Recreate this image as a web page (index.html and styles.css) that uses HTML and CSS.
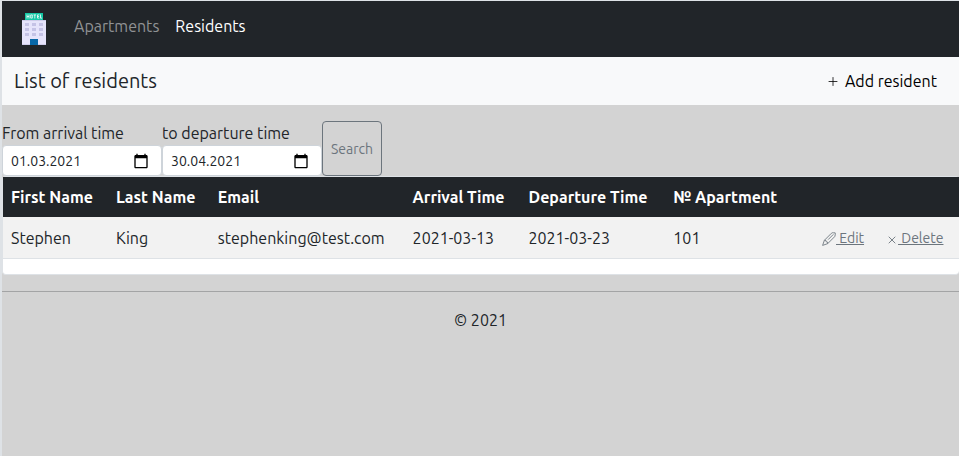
FILE: index.html
```html
<!DOCTYPE html>
<html lang="en">
<head>
<meta charset="utf-8">
<meta name="viewport" content="width=device-width, initial-scale=1">
<title>Residents</title>
<link rel="stylesheet" href="styles.css">
</head>
<body>
<header>
  <nav class="navbar">
    <a class="brand" href="#" aria-label="Hotel">
      <svg width="32" height="32" viewBox="0 0 32 32" aria-hidden="true">
        <path fill="#e6e4fb" d="M4 7h24v25H4z"/>
        <path fill="#cfcdea" d="M4 7h24v1H4zM4 31h24v1H4z"/>
        <path fill="#14c8a5" d="M7 0h18v7H7z"/>
        <path fill="none" stroke="#fff" stroke-width=".8" d="M9 1.500v4M11 1.500v4M9 3.500h2M12.700 1.900h1.600v3.200h-1.600zM15.500 1.900h2.600M16.800 1.900v3.600M21.300 1.900h-1.800v3.200h1.800M19.500 3.500h1.600M22.500 1.500v3.600h1.500"/>
        <path fill="#c5c3e6" d="M7 10h4v3H7zM14 10h4v3h-4zM21 10h4v3h-4zM7 15h4v3H7zM14 15h4v3h-4zM21 15h4v3h-4zM7 20h4v3H7zM14 20h4v3h-4zM21 20h4v3h-4z"/>
        <path fill="#0868a8" d="M12 26h8v6h-8z"/>
      </svg>
    </a>
    <a class="nav-link" href="#">Apartments</a>
    <a class="nav-link active" href="#" aria-current="page">Residents</a>
  </nav>
</header>
<main>
  <div class="titlebar">
    <h1>List of residents</h1>
    <a class="add" href="#">
      <svg width="16" height="16" viewBox="0 0 16 16" aria-hidden="true"><path d="M8 4.500v8M4 8.500h8" fill="none" stroke="currentColor" stroke-width=".8" stroke-linecap="round"/></svg>
      Add resident
    </a>
  </div>
  <form class="filter">
    <div class="field">
      <label for="from">From arrival time</label>
      <div class="date">
        <input id="from" type="text" value="01.03.2021">
        <svg width="16" height="16" viewBox="0 0 24 24" aria-hidden="true"><path d="M20 3h-1V1h-2v2H7V1H5v2H4c-1.100 0-2 .9-2 2v16c0 1.100.9 2 2 2h16c1.100 0 2-.9 2-2V5c0-1.100-.9-2-2-2zm0 18H4V8h16v13z"/></svg>
      </div>
    </div>
    <div class="field">
      <label for="to">to departure time</label>
      <div class="date">
        <input id="to" type="text" value="30.04.2021">
        <svg width="16" height="16" viewBox="0 0 24 24" aria-hidden="true"><path d="M20 3h-1V1h-2v2H7V1H5v2H4c-1.100 0-2 .9-2 2v16c0 1.100.9 2 2 2h16c1.100 0 2-.9 2-2V5c0-1.100-.9-2-2-2zm0 18H4V8h16v13z"/></svg>
      </div>
    </div>
    <button class="search" type="submit">Search</button>
  </form>
  <div class="card">
    <table>
      <thead>
        <tr>
          <th class="first">First Name</th>
          <th class="last">Last Name</th>
          <th class="email">Email</th>
          <th class="arrival">Arrival Time</th>
          <th class="departure">Departure Time</th>
          <th class="apartment">№ Apartment</th>
          <th class="edit"></th>
          <th class="delete"></th>
        </tr>
      </thead>
      <tbody>
        <tr>
          <td>Stephen</td>
          <td>King</td>
          <td>stephenking@test.com</td>
          <td>2021-03-13</td>
          <td>2021-03-23</td>
          <td>101</td>
          <td><a class="action" href="#"><svg width="14" height="14" viewBox="0 0 16 16" aria-hidden="true"><path fill="none" stroke="currentColor" stroke-linejoin="round" d="M.7 15.300l2-5.800 8-8q1-1 2.300-.6l2.100.1q.4 2.300-.6 4.300l-8 8zM2.700 9.500l1.800.2.300 1.500 1.500.3.200 1.800M13 2.700l-6 6"/></svg> Edit</a></td>
          <td><a class="action" href="#"><svg width="10" height="14" viewBox="0 0 10 14" aria-hidden="true"><path fill="none" stroke="currentColor" stroke-width=".9" stroke-linecap="round" d="M1 5l6 6M7 5l-6 6"/></svg> Delete</a></td>
        </tr>
      </tbody>
    </table>
  </div>
</main>
<footer>© 2021</footer>
</body>
</html>
```
FILE: styles.css
```css
* { box-sizing: border-box; }

html { background: #d3d3d3; }

body {
  margin: 0;
  min-height: 100vh;
  border-top: 1px solid #dee2e6;
  border-left: 2px solid #dee2e6;
  background: #d3d3d3;
  color: #212529;
  font: 16px/24px Ubuntu, "Noto Sans", sans-serif;
}

.navbar {
  display: flex;
  align-items: center;
  gap: 16px;
  height: 56px;
  padding: 0 16px;
  background: #212529;
}

.brand { display: flex; margin-right: 8px; }

.nav-link {
  padding-bottom: 6px;
  color: #909294;
  text-decoration: none;
}

.nav-link.active { color: #fff; }

.titlebar {
  display: flex;
  align-items: center;
  justify-content: space-between;
  height: 48px;
  padding: 0 22px 0 12px;
  background: #f8f9fa;
}

h1 {
  margin: 0;
  font-size: 20px;
  font-weight: 400;
}

.add {
  display: flex;
  align-items: center;
  gap: 4px;
  color: #000;
  text-decoration: none;
}

.filter {
  display: flex;
  padding-top: 16px;
}

.field { width: 160px; }

label { display: block; }

.date {
  display: flex;
  align-items: center;
  height: 31px;
  padding: 0 12px 0 8px;
  border: 1px solid #ced4da;
  border-radius: 4px;
  background: #fff;
}

.date input {
  flex: 1;
  min-width: 0;
  padding: 0;
  border: 0;
  background: none;
  color: #212529;
  font: inherit;
  font-size: 14px;
}

.search {
  width: 60px;
  padding: 0;
  border: 1px solid #6c757d;
  border-radius: 4px;
  background: none;
  color: #6c757d;
  font: inherit;
  font-size: 14px;
}

.card {
  padding-bottom: 15px;
  border: 1px solid #dee2e6;
  border-right: 0;
  border-radius: 4px;
  background: #fff;
}

table {
  width: 100%;
  border-collapse: collapse;
}

th, td {
  padding: 8px;
  text-align: left;
  white-space: nowrap;
}

th {
  height: 40px;
  background: #212529;
  color: #fff;
}

td {
  height: 41px;
  border-bottom: 1px solid #dee2e6;
  background: #f2f2f2;
}

.first { width: 105px; }
.last { width: 102px; }
.email { width: 195px; }
.arrival { width: 116px; }
.departure { width: 145px; }
.apartment { width: 141px; }
.edit { width: 65px; }
.delete { width: 87px; }

.action {
  padding-left: 8px;
  color: #6c757d;
  font-size: 14px;
}

.action svg { vertical-align: -3px; }

footer {
  margin-top: 16px;
  padding: 16px 0;
  border-top: 1px solid #a3a4a5;
  text-align: center;
}
```
